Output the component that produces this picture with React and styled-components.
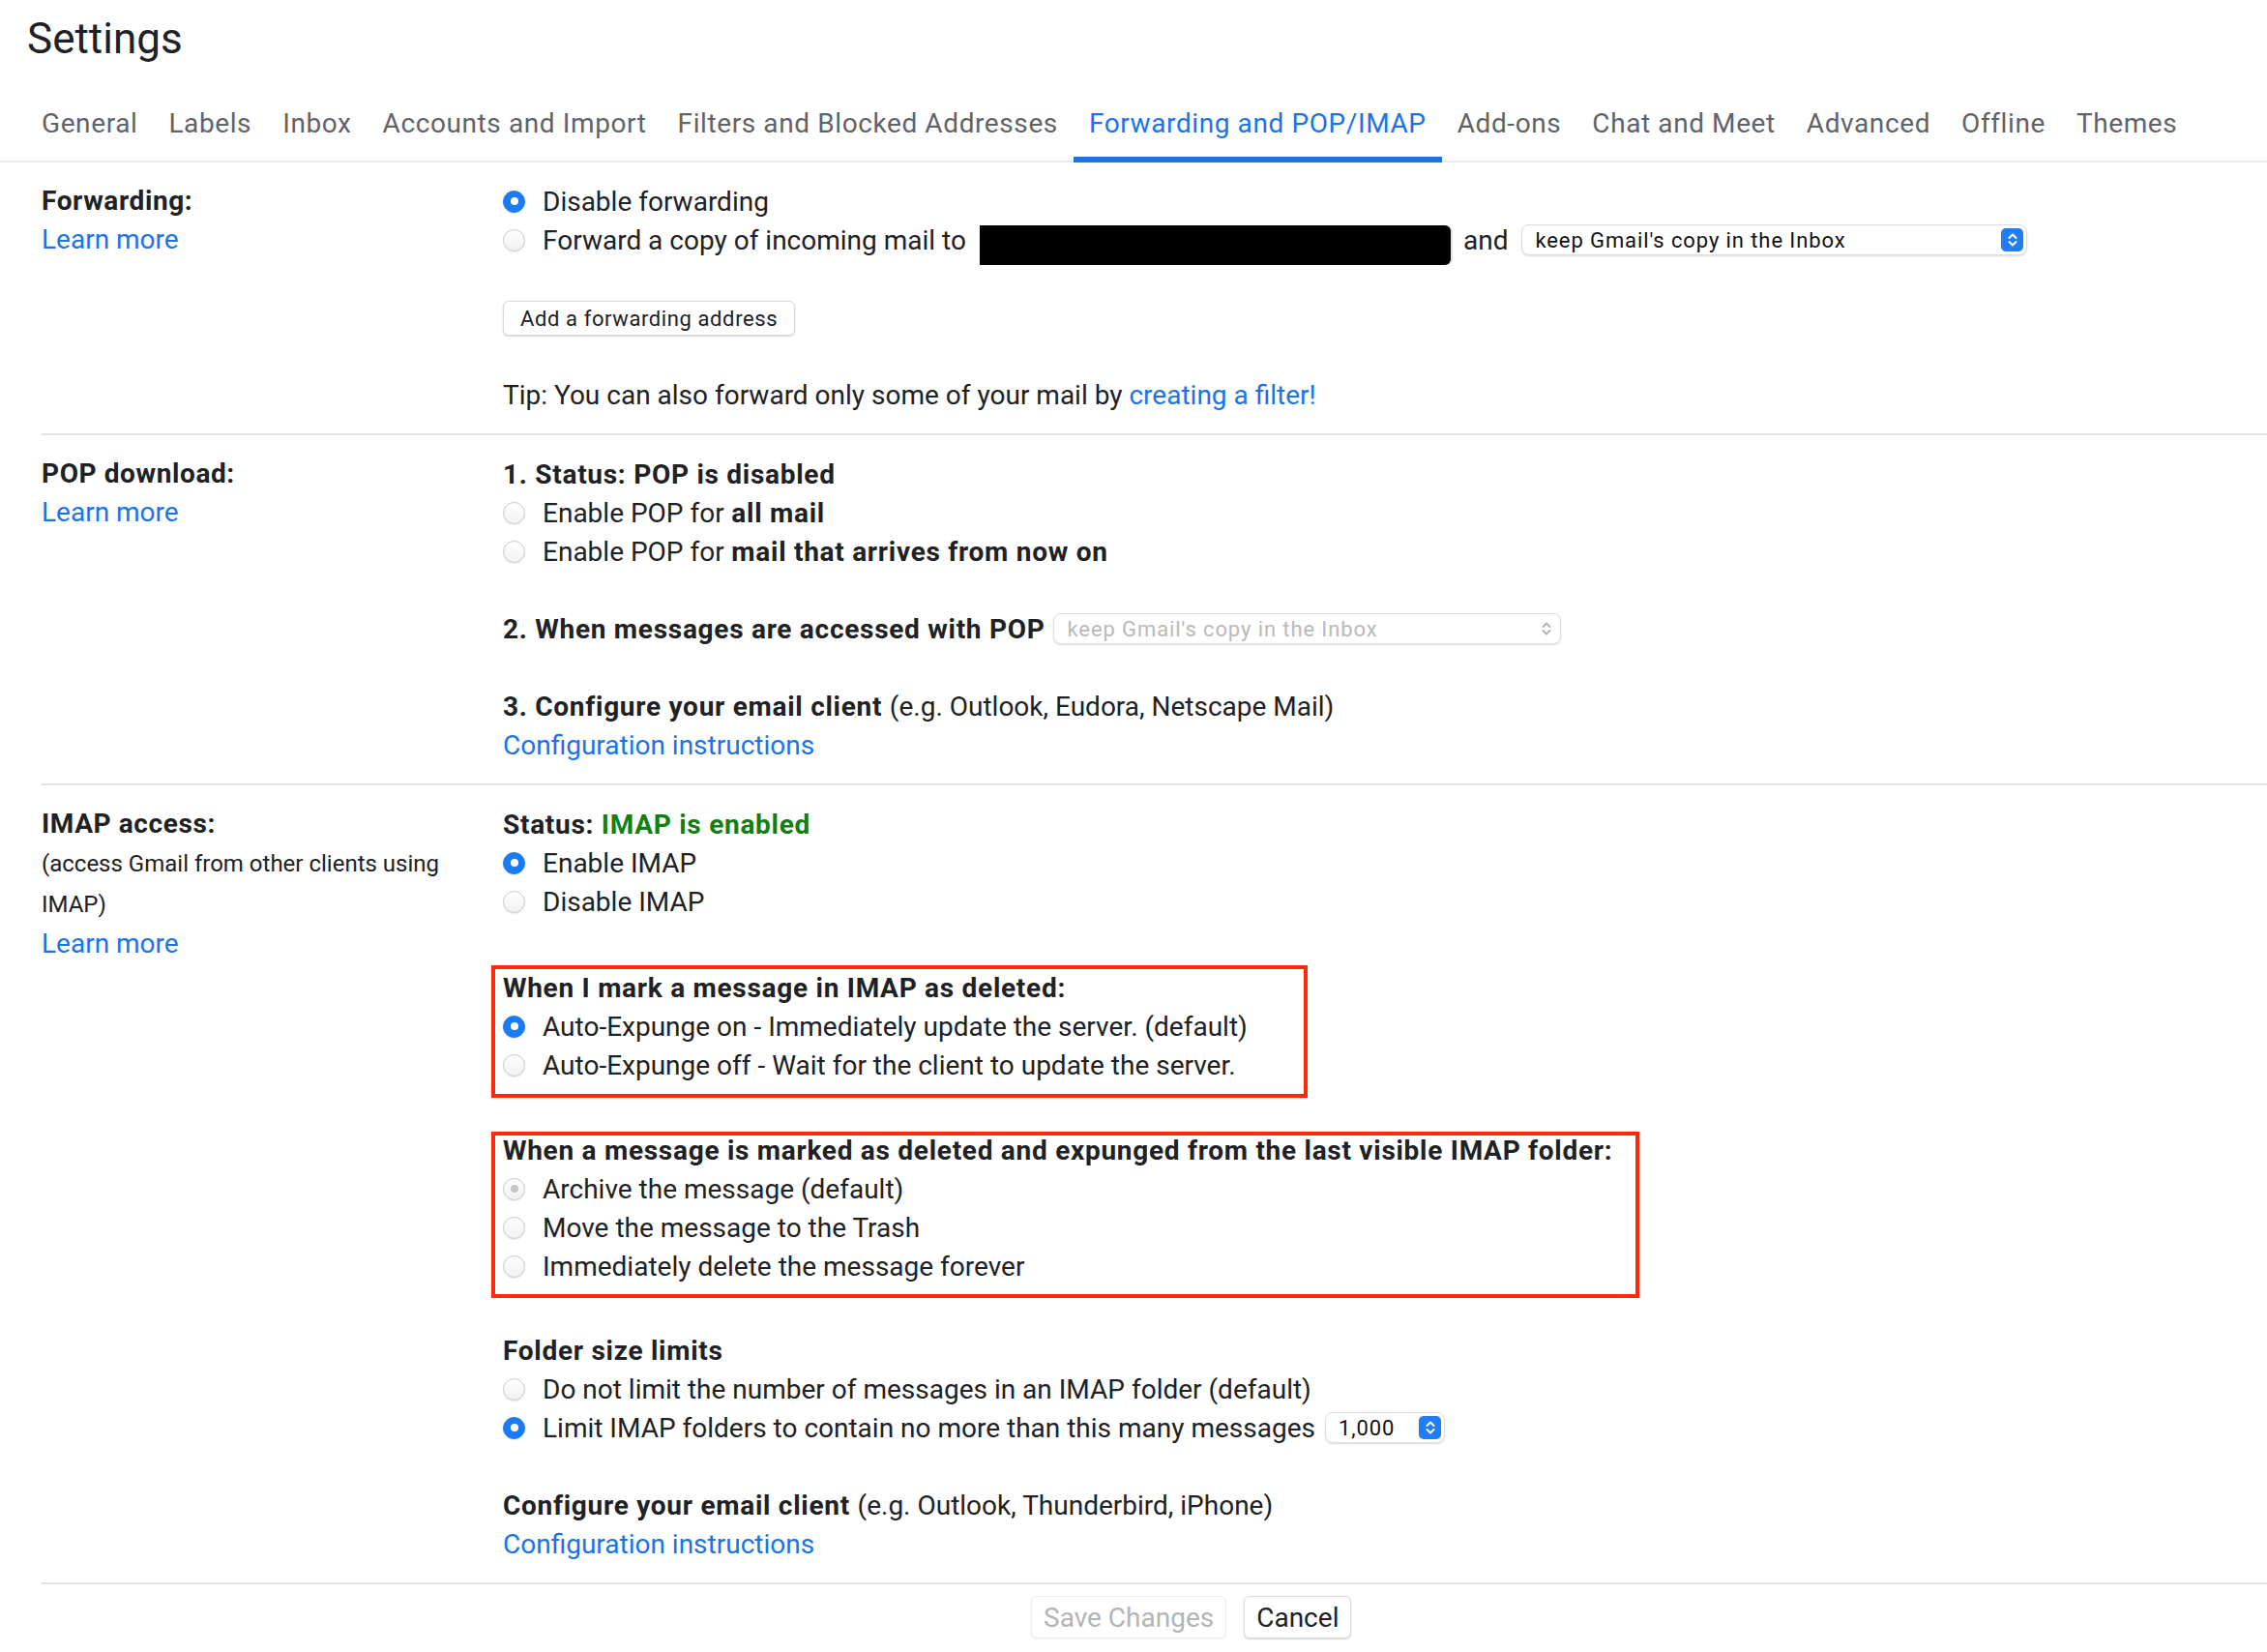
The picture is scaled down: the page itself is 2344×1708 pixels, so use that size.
import React from "react";
import styled, { createGlobalStyle } from "styled-components";

const GlobalStyle = createGlobalStyle`
    html, body {
        margin: 0;
        background: #ffffff;
    }
    body {
        font-family: Roboto, "Noto Sans", "Liberation Sans", sans-serif;
        color: #202124;
    }
`

const Page = styled.div`
    width: 2344px;
    min-height: 1708px;
    overflow: hidden;
`

const Title = styled.h1`
    margin: 0;
    padding-left: 28px;
    height: 80px;
    line-height: 80px;
    font-size: 44px;
    font-weight: 400;
    color: #202124;
`

const TabBar = styled.nav`
    display: flex;
    padding-left: 27px;
    border-bottom: 2px solid #e8eaed;
`

const Tab = styled.div`
    position: relative;
    padding: 28px 16px 18px;
    line-height: 40px;
    font-size: 28px;
    letter-spacing: 0.6px;
    color: ${p => (p.$active ? "#1a73e8" : "#5f6368")};
    white-space: nowrap;

    &::after {
        content: "";
        display: ${p => (p.$active ? "block" : "none")};
        position: absolute;
        left: 0;
        right: 0;
        bottom: -2px;
        height: 6px;
        background: #1a73e8;
    }
`

const Section = styled.section`
    display: grid;
    grid-template-columns: 477px 1fr;
    margin-left: 43px;
    padding: 20px 0;
    border-bottom: 2px solid #e3e3e3;
`

const Side = styled.div`
    display: flex;
    flex-direction: column;
`

const Label = styled.div`
    line-height: 40px;
    font-size: 28px;
    font-weight: 700;
    letter-spacing: 0.6px;
`

const Note = styled.div`
    line-height: 42px;
    font-size: 24px;
`

const Link = styled.a`
    color: #1a73e8;
    text-decoration: none;
    cursor: pointer;
`

const SideLink = styled(Link)`
    line-height: 40px;
    font-size: 28px;
`

const Main = styled.div`
    display: flex;
    flex-direction: column;
    align-items: flex-start;
`

const Line = styled.div`
    display: flex;
    align-items: center;
    height: 40px;
    margin-top: ${p => p.$gap || 0}px;
    font-size: 28px;
    font-weight: ${p => (p.$bold ? 700 : 400)};
    letter-spacing: ${p => (p.$bold ? 0.72 : 0)}px;
    white-space: nowrap;
`

const B = styled.b`
    font-weight: 700;
    letter-spacing: 0.72px;
    white-space: pre;
`

const Green = styled.span`
    color: #108010;
    white-space: pre;
`

const RadioDot = styled.span`
    box-sizing: border-box;
    width: 23px;
    height: 23px;
    margin-right: 18px;
    border-radius: 50%;
    flex-shrink: 0;
    display: flex;
    align-items: center;
    justify-content: center;
    border: 1px solid ${p => (p.$checked && !p.$disabled ? "#1a7cf5" : "#c9c9c9")};
    background: ${p =>
        p.$checked && !p.$disabled
            ? "#1a7cf5"
            : "linear-gradient(#ffffff, #f1f1f1)"};
    box-shadow: 0 1px 1px rgba(0, 0, 0, 0.08);

    &::after {
        content: "";
        display: ${p => (p.$checked ? "block" : "none")};
        width: 8px;
        height: 8px;
        border-radius: 50%;
        background: ${p => (p.$disabled ? "#c4c4c4" : "#ffffff")};
    }
`

const Radio = ({ checked, disabled, gap, children }) => (
    <Line $gap={gap}>
        <RadioDot $checked={checked} $disabled={disabled} />
        {children}
    </Line>
)

const Redacted = styled.span`
    display: inline-block;
    width: 487px;
    height: 41px;
    margin: 10px 13px 0 14px;
    background: #000000;
    border-radius: 0 6px 6px 0;
    box-shadow: 3px 0 0 -1px #e2e2e2;
`

const SelectBox = styled.div`
    box-sizing: border-box;
    display: flex;
    align-items: center;
    justify-content: space-between;
    width: ${p => p.$width}px;
    height: 32px;
    margin-left: ${p => p.$left || 0}px;
    padding: 0 3px 0 13px;
    border: 1px solid #dedede;
    border-radius: 8px;
    box-shadow: 0 1px 2px rgba(0, 0, 0, 0.14);
    background: #ffffff;
    font-size: 22px;
    font-weight: 400;
    letter-spacing: 0.9px;
    color: ${p => (p.$disabled ? "#b9b9b9" : "#111111")};
`

const Stepper = styled.span`
    display: flex;
    align-items: center;
    justify-content: center;
    width: 23px;
    height: 24px;
    border-radius: 5px;
    background: ${p => (p.$muted ? "transparent" : "#1f7df6")};
`

const Chevrons = ({ muted }) => (
    <Stepper $muted={muted}>
        <svg width="14" height="18" viewBox="0 0 14 18" fill="none">
            <path
                d="M3.5 7 L7 3.5 L10.5 7 M3.5 11 L7 14.5 L10.5 11"
                stroke={muted ? "#b3b3b3" : "#ffffff"}
                strokeWidth="2"
                strokeLinecap="round"
                strokeLinejoin="round"
            />
        </svg>
    </Stepper>
)

const Select = ({ width, left, disabled, children }) => (
    <SelectBox $width={width} $left={left} $disabled={disabled}>
        <span>{children}</span>
        <Chevrons muted={disabled} />
    </SelectBox>
)

const SmallButton = styled.button`
    box-sizing: border-box;
    height: 36px;
    margin-top: 43px;
    padding: 0 17px;
    border: 1px solid #d9d9d9;
    border-radius: 6px;
    background: #ffffff;
    box-shadow: 0 1px 2px rgba(0, 0, 0, 0.18);
    font-family: inherit;
    font-size: 22px;
    letter-spacing: 0.6px;
    color: #202124;
`

const Highlight = styled.div`
    margin: ${p => p.$gap}px 0 0 -12px;
    padding: 0 ${p => p.$padRight}px ${p => p.$padBottom}px 8px;
    border: 4px solid #ff2a0a;
    display: flex;
    flex-direction: column;
    align-items: flex-start;

    & > :first-child {
        margin-top: ${p => p.$lift}px;
    }
`

const Footer = styled.div`
    display: flex;
    gap: 18px;
    padding: 12px 0 0 1066px;
`

const FooterButton = styled.button`
    box-sizing: border-box;
    height: 44px;
    padding: 0 12px;
    border: 1px solid ${p => (p.$disabled ? "#ececec" : "#dadada")};
    border-radius: 6px;
    background: #ffffff;
    box-shadow: 0 1px 2px rgba(0, 0, 0, ${p => (p.$disabled ? 0.06 : 0.16)});
    font-family: inherit;
    font-size: 28px;
    color: ${p => (p.$disabled ? "#b4b4b4" : "#202124")};
`

const tabs = [
    "General",
    "Labels",
    "Inbox",
    "Accounts and Import",
    "Filters and Blocked Addresses",
    "Forwarding and POP/IMAP",
    "Add-ons",
    "Chat and Meet",
    "Advanced",
    "Offline",
    "Themes",
];

const App = () => (
    <Page>
        <GlobalStyle />
        <Title>Settings</Title>
        <TabBar>
            {tabs.map(t => (
                <Tab key={t} $active={t === "Forwarding and POP/IMAP"}>{t}</Tab>
            ))}
        </TabBar>

        <Section>
            <Side>
                <Label>Forwarding:</Label>
                <SideLink>Learn more</SideLink>
            </Side>
            <Main>
                <Radio checked>Disable forwarding</Radio>
                <Radio>
                    Forward a copy of incoming mail to
                    <Redacted />
                    and
                    <Select width={523} left={14}>keep Gmail's copy in the Inbox</Select>
                </Radio>
                <SmallButton>Add a forwarding address</SmallButton>
                <Line $gap={41}>
                    Tip: You can also forward only some of your mail by&nbsp;<Link>creating a filter!</Link>
                </Line>
            </Main>
        </Section>

        <Section>
            <Side>
                <Label>POP download:</Label>
                <SideLink>Learn more</SideLink>
            </Side>
            <Main>
                <Line $bold>1. Status: POP is disabled</Line>
                <Radio>Enable POP for <B> all mail</B></Radio>
                <Radio>Enable POP for <B> mail that arrives from now on</B></Radio>
                <Line $gap={40} $bold>
                    2. When messages are accessed with POP
                    <Select width={525} left={9} disabled>keep Gmail's copy in the Inbox</Select>
                </Line>
                <Line $gap={40}>
                    <B>3. Configure your email client </B>(e.g. Outlook, Eudora, Netscape Mail)
                </Line>
                <Line><Link>Configuration instructions</Link></Line>
            </Main>
        </Section>

        <Section>
            <Side>
                <Label>IMAP access:</Label>
                <Note>(access Gmail from other clients using</Note>
                <Note>IMAP)</Note>
                <SideLink>Learn more</SideLink>
            </Side>
            <Main>
                <Line $bold>Status:&nbsp;<Green>IMAP is enabled</Green></Line>
                <Radio checked>Enable IMAP</Radio>
                <Radio>Disable IMAP</Radio>

                <Highlight $gap={46} $padRight={58} $padBottom={10} $lift={-1}>
                    <Line $bold>When I mark a message in IMAP as deleted:</Line>
                    <Radio checked>Auto-Expunge on - Immediately update the server. (default)</Radio>
                    <Radio>Auto-Expunge off - Wait for the client to update the server.</Radio>
                </Highlight>

                <Highlight $gap={35} $padRight={24} $padBottom={9} $lift={-5}>
                    <Line $bold>When a message is marked as deleted and expunged from the last visible IMAP folder:</Line>
                    <Radio checked disabled>Archive the message (default)</Radio>
                    <Radio>Move the message to the Trash</Radio>
                    <Radio>Immediately delete the message forever</Radio>
                </Highlight>

                <Line $gap={34} $bold>Folder size limits</Line>
                <Radio>Do not limit the number of messages in an IMAP folder (default)</Radio>
                <Radio checked>
                    Limit IMAP folders to contain no more than this many messages
                    <Select width={124} left={10}>1,000</Select>
                </Radio>
                <Line $gap={40}>
                    <B>Configure your email client </B>(e.g. Outlook, Thunderbird, iPhone)
                </Line>
                <Line><Link>Configuration instructions</Link></Line>
            </Main>
        </Section>

        <Footer>
            <FooterButton $disabled>Save Changes</FooterButton>
            <FooterButton>Cancel</FooterButton>
        </Footer>
    </Page>
);

export default App;
